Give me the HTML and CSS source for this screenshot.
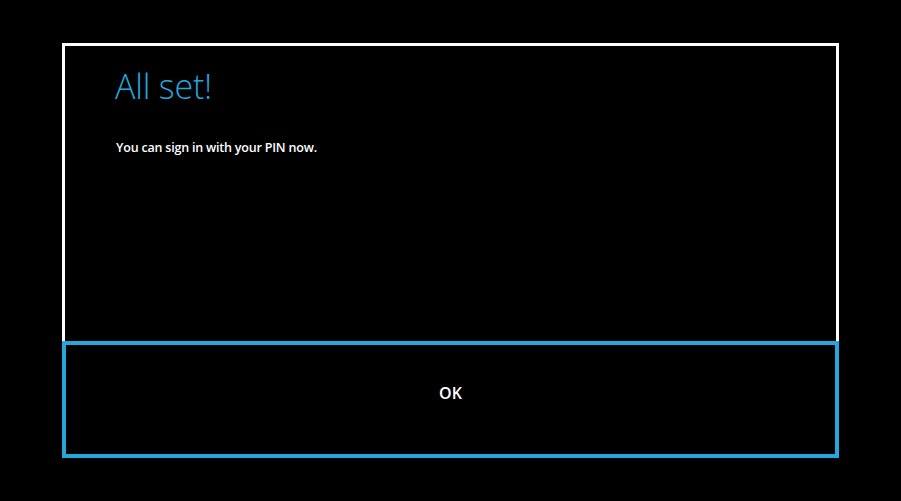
FILE: index.html
```html
<!DOCTYPE html>
<html>
<head>
<meta charset="utf-8">
<link rel="stylesheet" href="styles.css">
</head>
<body>
<div class="dialog">
  <div class="panel">
    <h1 class="title">All set!</h1>
    <p class="message">You can sign in with your PIN now.</p>
  </div>
  <button class="ok">OK</button>
</div>
</body>
</html>
```
FILE: styles.css
```css
html, body {
  margin: 0;
  padding: 0;
  background: #000;
  height: 100%;
}
body {
  font-family: "Open Sans", "Noto Sans", sans-serif;
  padding: 43px 0 0 62px;
  box-sizing: border-box;
}
.dialog {
  width: 777px;
  display: flex;
  flex-direction: column;
}
.panel {
  height: 298px;
  box-sizing: border-box;
  border: 3px solid #fff;
  border-bottom: none;
  padding: 17px 0 0 50px;
}
.title {
  margin: 0;
  color: #27a6dd;
  font-weight: 300;
  font-size: 34px;
  line-height: 46px;
  letter-spacing: -0.2px;
}
.message {
  margin: 30px 0 0 1px;
  color: #fff;
  font-size: 12.5px;
  font-weight: 600;
  letter-spacing: -0.2px;
}
.ok {
  height: 117px;
  box-sizing: border-box;
  border: 4px solid #27a6dd;
  background: #000;
  color: #fff;
  font-family: "Open Sans", "Noto Sans", sans-serif;
  font-size: 16px;
  font-weight: 600;
  padding: 0 0 14px 0;
  margin: 0;
}
```
